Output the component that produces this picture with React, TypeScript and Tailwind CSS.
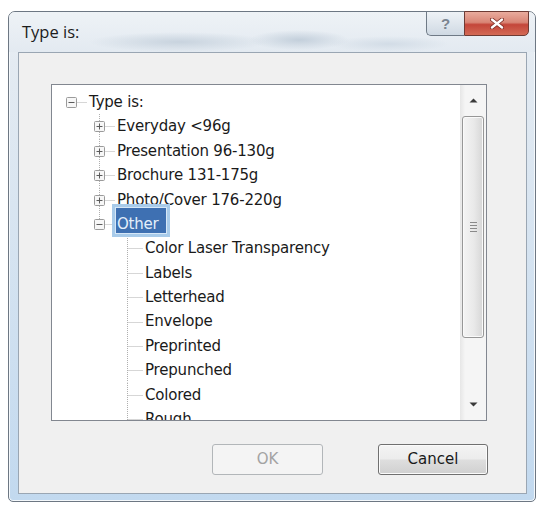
import React from 'react'

type Cell = 'none' | 'pass' | 'tee' | 'ell' | 'root'

interface Row {
  label: string
  cells: Cell[]
  box?: 'plus' | 'minus'
  selected?: boolean
}

const rows: Row[] = [
  { label: 'Type is:', cells: ['root'], box: 'minus' },
  { label: 'Everyday <96g', cells: ['none', 'tee'], box: 'plus' },
  { label: 'Presentation 96-130g', cells: ['none', 'tee'], box: 'plus' },
  { label: 'Brochure 131-175g', cells: ['none', 'tee'], box: 'plus' },
  { label: 'Photo/Cover 176-220g', cells: ['none', 'tee'], box: 'plus' },
  { label: 'Other', cells: ['none', 'ell'], box: 'minus', selected: true },
  { label: 'Color Laser Transparency', cells: ['none', 'none', 'tee'] },
  { label: 'Labels', cells: ['none', 'none', 'tee'] },
  { label: 'Letterhead', cells: ['none', 'none', 'tee'] },
  { label: 'Envelope', cells: ['none', 'none', 'tee'] },
  { label: 'Preprinted', cells: ['none', 'none', 'tee'] },
  { label: 'Prepunched', cells: ['none', 'none', 'tee'] },
  { label: 'Colored', cells: ['none', 'none', 'tee'] },
  { label: 'Rough', cells: ['none', 'none', 'tee'] },
]

// one 28px column of tree connector lines
function Connector({ kind, box }: { kind: Cell; box?: 'plus' | 'minus' }) {
  const dash = { stroke: '#adadad', strokeWidth: 1, strokeDasharray: '1 1' }
  return (
    <svg width="28" height="24.4" viewBox="0 0 28 24.4" className="shrink-0 overflow-visible">
      {(kind === 'pass' || kind === 'tee') && <line x1="14.5" y1="0" x2="14.5" y2="24.4" {...dash} />}
      {kind === 'ell' && <line x1="14.5" y1="0" x2="14.5" y2="12.2" {...dash} />}
      {kind !== 'none' && kind !== 'pass' && <line x1="14.5" y1="12.5" x2="30" y2="12.5" {...dash} />}
      {box && (
        <g>
          <rect x="9.5" y="7.5" width="10" height="10" rx="1" fill="#f7f7f7" stroke="#9a9a9a" />
          <line x1="11.5" y1="12.5" x2="17.5" y2="12.5" stroke="#5a5a5a" />
          {box === 'plus' && <line x1="14.5" y1="9.5" x2="14.5" y2="15.5" stroke="#5a5a5a" />}
        </g>
      )}
    </svg>
  )
}

function TreeRow({ row }: { row: Row }) {
  return (
    <div className="flex items-center h-[24.4px] shrink-0">
      {row.cells.map((c, i) => (
        <Connector key={i} kind={c} box={i === row.cells.length - 1 ? row.box : undefined} />
      ))}
      <span className="relative ml-[4px] h-[24.4px] flex items-center whitespace-nowrap">
        {row.selected && (
          <span className="absolute left-[-5px] top-[-8px] w-[58px] h-[33px] border-[3px] border-[#a8cbea] bg-[#3e70b2] shadow-[inset_0_0_0_1px_#d6e7f7]" />
        )}
        <span className={row.selected ? 'relative text-[#e4eefa]' : 'relative text-[#1a1a1a]'}>{row.label}</span>
      </span>
    </div>
  )
}

function ScrollBar() {
  return (
    <div className="w-[26px] shrink-0 flex flex-col bg-[linear-gradient(90deg,#e6e6e6,#f5f5f5_20%,#f5f5f5)]">
      <div className="h-[31px] flex items-center justify-center">
        <svg width="9" height="5" viewBox="0 0 9 5">
          <path d="M0.5 4.5 L4.5 0.5 L8.5 4.5 Z" fill="#3a3a3a" />
        </svg>
      </div>
      <div className="h-[222px] mx-[2px] rounded-[3px] border border-[#979797] bg-[linear-gradient(90deg,#f4f4f4,#e9e9e9_55%,#d6d6d6)] shadow-[inset_0_0_0_1px_#fafafa] flex flex-col items-center justify-center gap-[2px]">
        {[0, 1, 2, 3].map(i => (
          <div key={i} className="w-[7px] h-[1px] bg-[#8a8a8a]" />
        ))}
      </div>
      <div className="flex-1" />
      <div className="h-[31px] flex items-center justify-center">
        <svg width="9" height="5" viewBox="0 0 9 5">
          <path d="M0.5 0.5 L4.5 4.5 L8.5 0.5 Z" fill="#3a3a3a" />
        </svg>
      </div>
    </div>
  )
}

export default function App() {
  return (
    <div className="w-[543px] h-[507px] bg-white overflow-hidden pt-[11px] pl-[8px] font-['DejaVu_Sans',sans-serif]">
      <div className="w-[528px] h-[491px] flex flex-col rounded-t-[7px] rounded-b-[5px] border border-[#6d7783] bg-[linear-gradient(180deg,#eef2f6_0%,#e4ebf2_10%,#c2d9ef_100%)] shadow-[inset_0_0_0_1px_#f4f8fb]">
        {/* title bar */}
        <div className="h-[40px] flex items-start bg-[radial-gradient(ellipse_90px_10px_at_170px_30px,#c8d3de,transparent),radial-gradient(ellipse_50px_10px_at_290px_28px,#c3cfdb,transparent),radial-gradient(ellipse_60px_8px_at_380px_32px,#d2dce6,transparent),linear-gradient(180deg,#eef2f6,#e3eaf1)] rounded-t-[6px]">
          <span className="pl-[13px] pt-[10px] text-[16.5px] leading-[20px] text-[#1c1c1c] font-['Open_Sans',sans-serif]">Type is:</span>
          <div className="ml-auto mr-[6px] mt-[-1px] flex">
            <div className="w-[38px] h-[25px] rounded-bl-[5px] border border-r-0 border-[#6f7a86] bg-[linear-gradient(180deg,#eef2f6,#dfe6ed_50%,#cfd9e3)] flex items-center justify-center">
              <span className="text-[15px] font-bold text-[#7b8590] leading-none font-['Liberation_Sans',sans-serif]">?</span>
            </div>
            <div className="w-[65px] h-[25px] rounded-br-[5px] border border-[#6e3b34] bg-[linear-gradient(180deg,#e9ab9d,#d98676_45%,#c4463a_55%,#d36a55)] flex items-center justify-center">
              <svg width="14" height="11" viewBox="0 0 14 11">
                <path d="M2 1.5 L12 9.5 M12 1.5 L2 9.5" stroke="#7a2a22" strokeWidth="4" strokeLinecap="round" />
                <path d="M2 1.5 L12 9.5 M12 1.5 L2 9.5" stroke="#ffffff" strokeWidth="2.4" strokeLinecap="round" />
              </svg>
            </div>
          </div>
        </div>

        {/* client area */}
        <div className="ml-[9px] w-[509px] h-[442px] border border-[#9aa6b3] bg-[#f0f0f0] flex flex-col">
          <div className="mt-[31px] ml-[32px] w-[436px] h-[337px] border border-[#828790] bg-white flex">
            <div className="flex-1 overflow-hidden flex flex-col pt-[5px] pl-[5px] text-[15px] tracking-[-0.2px]">
              {rows.map(r => (
                <TreeRow key={r.label} row={r} />
              ))}
            </div>
            <ScrollBar />
          </div>

          <div className="mt-[23px] ml-[193px] flex gap-[55px] text-[15px]">
            <div className="w-[111px] h-[31px] rounded-[3px] border border-[#b2b6b9] bg-[#f4f4f4] flex items-center justify-center text-[#a3a3a3]">
              OK
            </div>
            <div className="w-[110px] h-[31px] rounded-[3px] border border-[#707070] bg-[linear-gradient(180deg,#f4f4f4,#ececec_48%,#dedede_52%,#d0d0d0)] shadow-[inset_0_0_0_1px_#fbfbfb] flex items-center justify-center text-[#1a1a1a]">
              Cancel
            </div>
          </div>
        </div>
      </div>
    </div>
  )
}
